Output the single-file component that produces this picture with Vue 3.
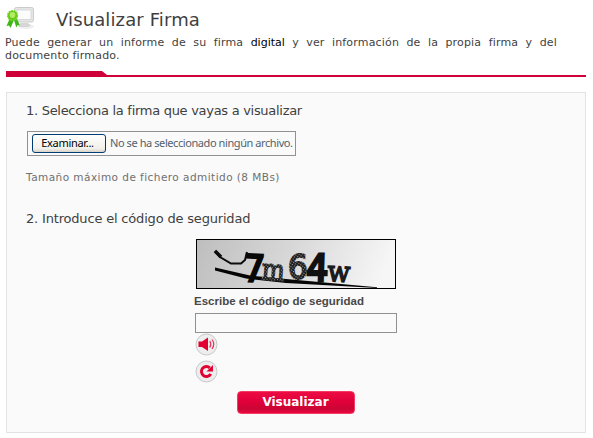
<script setup>
import { ref } from 'vue'

const code = ref('')
</script>

<template>
  <main class="page">
    <header class="heading">
      <svg class="heading-icon" width="30" height="26" viewBox="0 0 30 26">
        <ellipse cx="20" cy="20.500" rx="8" ry="2.500" fill="#eeeeee" />
        <rect x="8.5" y="1.5" width="19" height="14.500" rx="2" fill="#e6e6e6" stroke="#cbcbcb" />
        <rect x="11" y="4" width="14" height="9.5" fill="#fcfcfc" stroke="#cfcfcf" stroke-width=".7" />
        <path d="M14 17h8l3 2.500-3 1.500h-9z" fill="#d6d6d6" />
        <path d="M4 12l4 2-3.500 8-1.500-2.500-2.500.5zM8 14l3-1 3 6.500-2.500-.3-1.200 2.300z" fill="#3fb517" />
        <circle cx="6.500" cy="9.500" r="4.800" fill="#62c713" stroke="#76d52b" stroke-width="1.600" stroke-dasharray="1.800 .8" />
        <circle cx="6.500" cy="9" r="2.900" fill="#b2ec62" />
      </svg>
      <h1>Visualizar Firma</h1>
    </header>
    <p class="intro">
      <span class="line full">Puede generar un informe de su firma <span class="dark">digital</span> y ver información de la propia firma y del</span>
      <span class="line">documento firmado.</span>
    </p>
    <div class="rule"></div>

    <section class="panel">
      <h2 class="step-one">1. Selecciona la firma que vayas a visualizar</h2>
      <div class="file">
        <button type="button" class="browse"><span>Examinar...</span></button>
        <span class="file-name">No se ha seleccionado ningún archivo.</span>
      </div>
      <p class="limit">Tamaño máximo de fichero admitido (8 MBs)</p>
      <h2 class="step-two">2. Introduce el código de seguridad</h2>

      <div class="security">
        <svg class="captcha" width="200" height="50" viewBox="0 0 200 50">
          <defs>
            <linearGradient id="shade" x1="0" y1="0" x2="1" y2="0.1">
              <stop offset="0" stop-color="#bebebe" />
              <stop offset=".5" stop-color="#d8d8d8" />
              <stop offset="1" stop-color="#f6f6f6" />
            </linearGradient>
            <pattern id="grain" width="2.500" height="2.500" patternUnits="userSpaceOnUse" patternTransform="rotate(35)">
              <rect width="2.500" height="2.500" fill="#1c1c1c" />
              <rect width="1.100" height="1.100" fill="#a5a5a5" />
            </pattern>
          </defs>
          <rect x=".5" y=".5" width="199" height="49" fill="url(#shade)" stroke="#000" />
          <path d="M19 12L24 18L35 24.500H45L49 21L51 13" fill="none" stroke="#0c0c0c" stroke-width="2" />
          <path d="M19 12L25 18" stroke="#0c0c0c" stroke-width="3.500" />
          <path d="M19 28.500L54 36.500L90 40L181 48.200V49L90 44L50 39.500L19 31.500z" fill="#050505" />
          <g class="glyphs">
            <text transform="translate(47 42) rotate(3) scale(.9 1)" font-size="37" fill="#080808" stroke="#080808" stroke-width="2.600">7</text>
            <text class="slab" transform="translate(65 40) rotate(5) scale(.84 1)" font-size="29" fill="url(#grain)" stroke="url(#grain)" stroke-width="1.500">m</text>
            <text transform="translate(92 40) scale(.94 1)" font-size="33" fill="url(#grain)" stroke="url(#grain)" stroke-width="2">6</text>
            <text transform="translate(110 42) skewX(-2) scale(.93 1)" font-size="37" fill="#111" stroke="#111" stroke-width="3">4</text>
            <text class="slab" transform="translate(131 42) rotate(3) scale(.92 1)" font-size="29" fill="#1b1b1b" stroke="#1b1b1b" stroke-width="1.500">w</text>
          </g>
        </svg>
        <label for="code">Escribe el código de seguridad</label>
        <input id="code" v-model="code" type="text" />
        <button type="button" class="round">
          <svg width="23" height="23" viewBox="0 0 23 23">
            <circle cx="11.500" cy="11.500" r="10.500" fill="#ededed" stroke="#c8c8c8" />
            <path d="M3.500 8.500H7L13 4.500v13.500L7 14H3.500z" fill="#e20032" />
            <path d="M14.800 8q2 3.200 0 6.500M17 6.500q3.500 4.500 0 9.500" fill="none" stroke="#e63358" stroke-width="1.200" />
          </svg>
        </button>
        <button type="button" class="round second">
          <svg width="23" height="23" viewBox="0 0 23 23">
            <circle cx="11.500" cy="11.500" r="10.500" fill="#ededed" stroke="#c8c8c8" />
            <path d="M14.800 7.800A5 5 0 1 0 15.800 14" fill="none" stroke="#e20032" stroke-width="2.900" />
            <path d="M18 5v6.500h-6.500z" fill="#e20032" />
          </svg>
        </button>
      </div>
      <button type="button" class="submit">Visualizar</button>
    </section>
  </main>
</template>

<style>
body {
  background: #fff;
}
</style>

<style scoped>
* {
  box-sizing: border-box;
}
.page {
  width: 593px;
  height: 438px;
  padding: 6px 7px 0 5px;
  color: #3f3f3f;
  font-family: Verdana, "DejaVu Sans", sans-serif;
}
h1,
h2,
p {
  margin: 0;
  font-weight: 400;
  white-space: nowrap;
}
.heading {
  display: flex;
  height: 30px;
  padding-left: 1px;
}
.heading-icon {
  flex: none;
}
h1 {
  margin-left: 20px;
  font-size: 18px;
  line-height: 28px;
  letter-spacing: 0.12px;
}
.intro {
  width: 552px;
  font-size: 11px;
  line-height: 13px;
  letter-spacing: 0.18px;
  white-space: normal;
}
.line {
  display: block;
}
.full {
  text-align: justify;
  text-align-last: justify;
}
.dark {
  color: #000;
  letter-spacing: 0;
}
.rule {
  width: 580px;
  height: 6px;
  margin: 9px 0 15px 1px;
  background: #cf0039;
  clip-path: polygon(0 0, 96px 0, 101px 4px, 100% 4px, 100% 100%, 0 100%);
}
.panel {
  display: flex;
  flex-direction: column;
  align-items: flex-start;
  width: 580px;
  height: 341px;
  margin-left: 1px;
  padding-left: 19px;
  background: #fafafa;
  border: 1px solid #e3e3e3;
}
h2 {
  font-size: 13px;
  line-height: 16px;
  letter-spacing: -0.18px;
}
.step-one {
  margin-top: 10px;
  letter-spacing: -0.29px;
}
.file {
  display: flex;
  align-items: center;
  width: 269px;
  height: 25px;
  margin: 12px 0 0 1px;
  padding-left: 4px;
  border: 1px solid #919191;
  font-family: "Noto Sans", sans-serif;
  font-size: 11px;
}
.browse {
  flex: none;
  width: 74px;
  height: 19px;
  padding: 0 3px 0 0;
  border: 1px solid #003c74;
  border-radius: 3px;
  background: linear-gradient(#fff, #f1f0e9 80%, #d8d2c8);
  color: #000;
  font: inherit;
  line-height: 15px;
  letter-spacing: -0.3px;
}
.browse span {
  display: block;
  padding-bottom: 2px;
}
.file-name {
  margin-left: 4px;
  padding-bottom: 2px;
  color: #53616c;
  line-height: 16px;
  letter-spacing: -0.42px;
  white-space: nowrap;
}
.limit {
  margin-top: 14px;
  color: #707070;
  font-size: 10.5px;
  line-height: 14px;
  letter-spacing: 0.45px;
}
.step-two {
  margin-top: 27px;
}
.security {
  display: flex;
  flex-direction: column;
  align-items: flex-start;
  margin: 12px 0 0 168px;
}
.captcha {
  margin-left: 2px;
}
.glyphs {
  font-family: "DejaVu Sans", sans-serif;
}
.slab {
  font-family: "DejaVu Serif", serif;
}
label {
  margin-top: 5px;
  color: #484848;
  font: 700 11.5px/14px "Liberation Sans", Arial, sans-serif;
  white-space: nowrap;
}
input {
  width: 202px;
  height: 20px;
  margin: 5px 0 0 1px;
  padding: 0 4px;
  border: 1px solid #919191;
  border-radius: 0;
  background: #fafafa;
}
.round {
  width: 23px;
  height: 23px;
  margin-left: 1px;
  padding: 0;
  border: 0;
  background: none;
}
.round svg {
  display: block;
}
.second {
  margin-top: 4px;
}
.submit {
  width: 118px;
  height: 23px;
  margin: 8px 0 0 211px;
  padding: 0 1px 1px 0;
  border: 1px solid #f33b65;
  border-radius: 4px;
  background: linear-gradient(#ed0b43, #df0039 50%, #c90634 80%, #ec0841);
  color: #fff;
  font: 700 12px/20px "DejaVu Sans", sans-serif;
}
</style>
